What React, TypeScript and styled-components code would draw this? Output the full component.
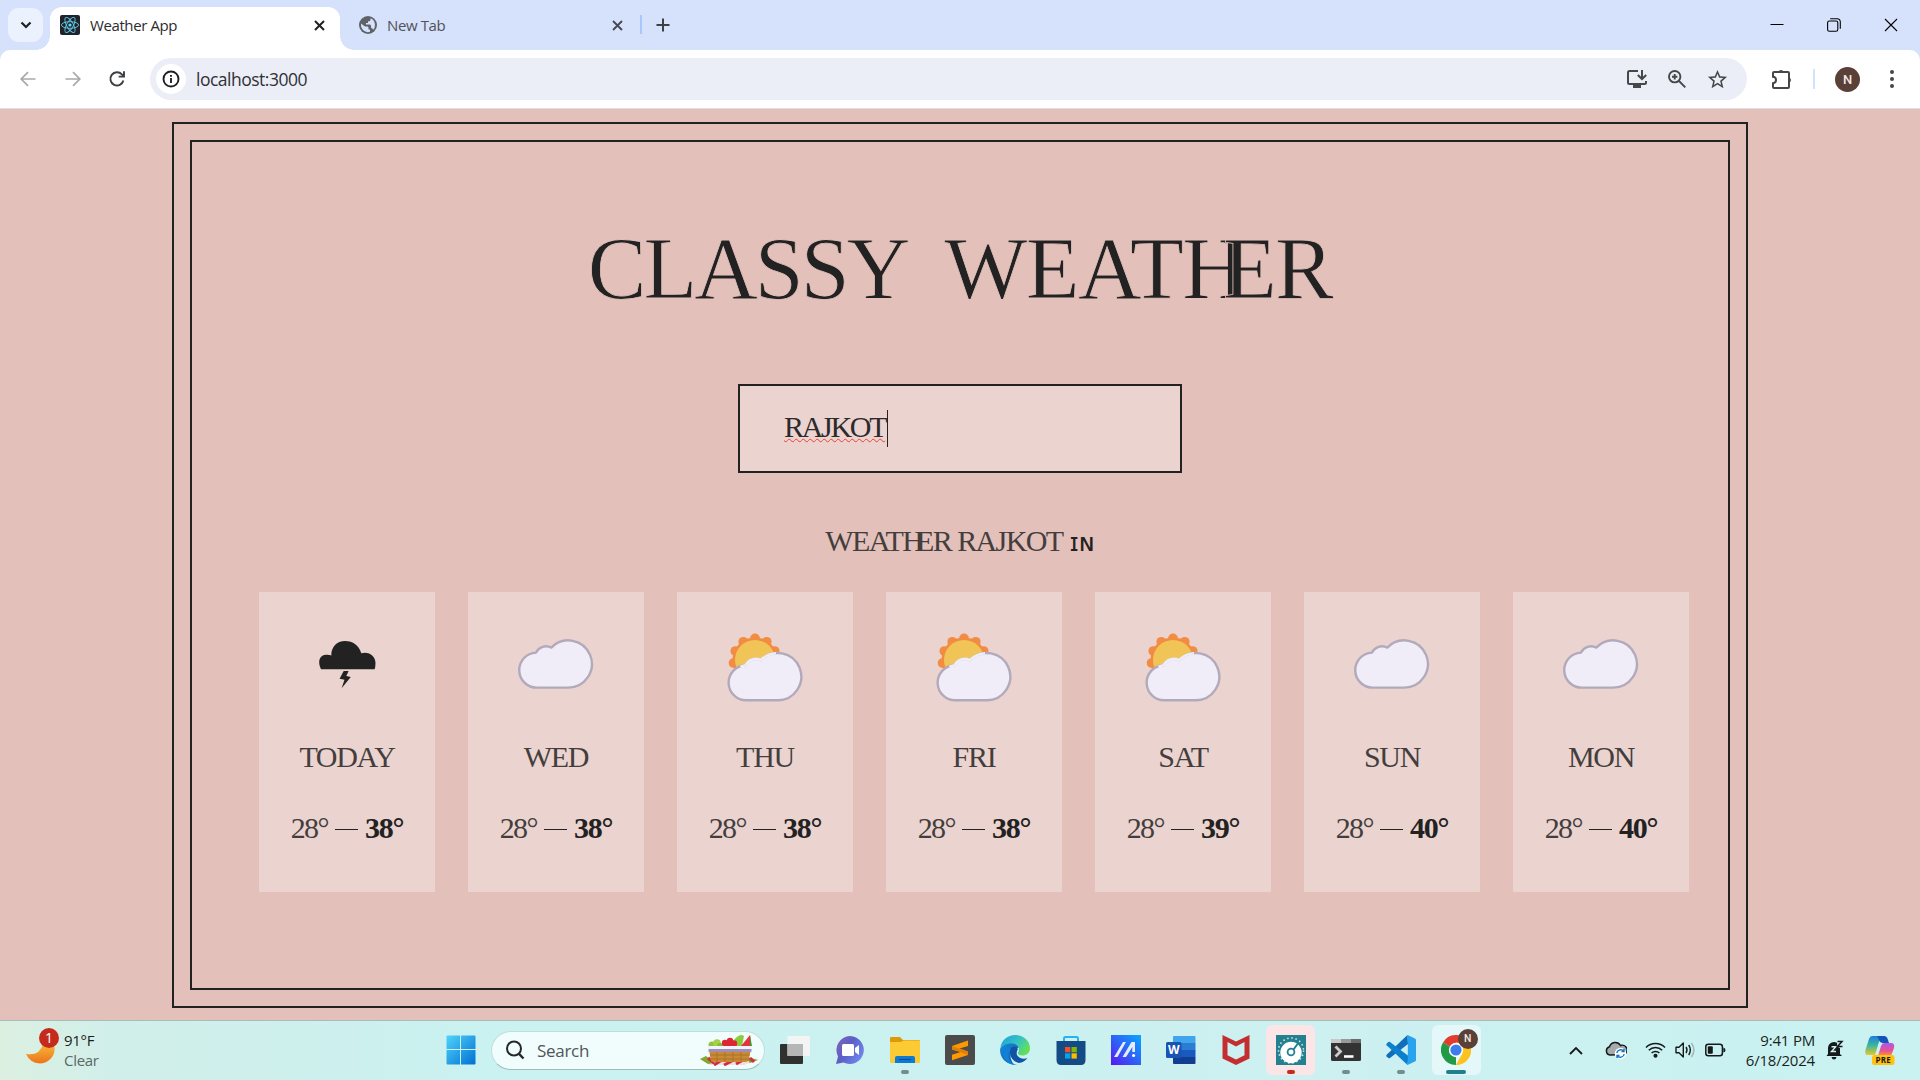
import React from "react";
import styled, { createGlobalStyle } from "styled-components";

const ui = `"Open Sans", "Noto Sans", sans-serif`;
const serif = `"Liberation Serif", serif`;
const ink = "#222222";
const softInk = "#433e3d";
const rose = "#e3c0ba";
const roseLight = "#ebd3cf";

const Global = createGlobalStyle`
  *, *::before, *::after { box-sizing: border-box; }
  body { margin: 0; background: ${rose}; overflow: hidden; }
  svg { display: block; flex: none; }
`;

const Screen = styled.div`
  width: 1920px;
  height: 1080px;
  display: flex;
  flex-direction: column;
  font-family: ${ui};
  overflow: hidden;
`;

/* ---------- browser chrome ---------- */

const TabStrip = styled.header`
  height: 50px;
  flex: none;
  background: #d6e1fc;
  display: flex;
  align-items: flex-end;
  padding-left: 8px;
`;

const TabSearch = styled.div`
  width: 35px;
  height: 34px;
  margin: 0 7px 8px 0;
  border-radius: 11px;
  background: #ebf2fd;
  display: grid;
  place-items: center;
`;

const Tab = styled.div<{ $active?: boolean }>`
  position: relative;
  width: ${(p) => (p.$active ? 290 : 299)}px;
  height: ${(p) => (p.$active ? 43 : 50)}px;
  padding: ${(p) => (p.$active ? "0 15px 7px 10px" : "0 16px 0 19px")};
  background: ${(p) => (p.$active ? "#fff" : "transparent")};
  border-radius: 12px 12px 0 0;
  display: flex;
  align-items: center;
  ${(p) =>
    p.$active &&
    `&::before, &::after {
      content: ""; position: absolute; bottom: 0; width: 14px; height: 14px;
    }
    &::before { left: -14px; background: radial-gradient(circle at 0 0, transparent 13.5px, #fff 14px); }
    &::after { right: -14px; background: radial-gradient(circle at 100% 0, transparent 13.5px, #fff 14px); }`}
`;

const TabTitle = styled.span<{ $active?: boolean }>`
  flex: 1;
  margin-left: 10px;
  font-size: 15px;
  letter-spacing: -0.4px;
  color: ${(p) => (p.$active ? "#2b2c2f" : "#505357")};
`;

const TabDivider = styled.div`
  width: 2px;
  height: 19px;
  margin: 0 14px 16px 1px;
  background: #a8c7fa;
`;

const NewTab = styled.div`
  height: 50px;
  display: flex;
  align-items: center;
`;

const WindowControls = styled.div`
  margin-left: auto;
  height: 50px;
  display: flex;
  align-items: center;
  gap: 43px;
  padding-right: 22px;
`;

const ToolbarBack = styled.div`
  background: #d6e1fc;
  flex: none;
`;

const Toolbar = styled.nav`
  height: 59px;
  background: #fff;
  border-radius: 10px 10px 0 0;
  border-bottom: 1px solid #dcdfe3;
  display: flex;
  align-items: center;
  padding: 0 21px 0 18px;
`;

const NavButtons = styled.div`
  display: flex;
  gap: 24.5px;
  width: 132px;
`;

const Omnibox = styled.div`
  width: 1597px;
  height: 42px;
  border-radius: 21px;
  background: #ebeef7;
  display: flex;
  align-items: center;
  padding: 0 18px 0 6px;
`;

const SiteInfo = styled.div`
  width: 30px;
  height: 30px;
  border-radius: 50%;
  background: #fff;
  display: grid;
  place-items: center;
`;

const Address = styled.span`
  flex: 1;
  margin-left: 10px;
  font-size: 17.5px;
  letter-spacing: -0.5px;
  color: #303134;
`;

const OmniActions = styled.div`
  display: flex;
  align-items: center;
  gap: 19px;
`;

const Extensions = styled.div`
  margin-left: 24px;
`;

const ToolDivider = styled.div`
  width: 2px;
  height: 20px;
  margin: 0 20px 0 20px;
  background: #d3e3fd;
`;

const Avatar = styled.div<{ $size: number }>`
  width: ${(p) => p.$size}px;
  height: ${(p) => p.$size}px;
  border-radius: 50%;
  background: #5a4037;
  color: #f3e9e5;
  font: 500 ${(p) => p.$size * 0.52}px/${(p) => p.$size}px Roboto, sans-serif;
  text-align: center;
`;

const MenuDots = styled.div`
  margin-left: auto;
`;

/* ---------- weather page ---------- */

const Page = styled.main`
  height: 911px;
  flex: none;
  background: ${rose};
  padding: 13px 172px 12px;
  font-family: ${serif};
  color: ${ink};
`;

const OuterFrame = styled.div`
  height: 886px;
  border: 2px solid ${ink};
  padding: 16px;
`;

const InnerFrame = styled.div`
  height: 850px;
  border: 2px solid ${ink};
  display: flex;
  flex-direction: column;
  align-items: center;
`;

const Title = styled.h1`
  margin: 77px 0 65px;
  font-size: 88px;
  font-weight: 400;
  line-height: 100px;
  white-space: nowrap;
  -webkit-text-stroke: 0.8px ${rose};
`;

const Word = styled.span<{ $gap?: number; $track: number }>`
  margin-left: ${(p) => p.$gap ?? 0}px;
  letter-spacing: ${(p) => p.$track}px;
`;

/* pulls the following letter onto the right stem of the H */
const Joining = styled.span`
  letter-spacing: -0.26em;
`;

const SearchField = styled.div`
  width: 444px;
  height: 89px;
  border: 2px solid ${ink};
  background: ${roseLight};
  padding: 24px 44px;
  display: flex;
`;

const Query = styled.span`
  height: 40px;
  margin-top: -3px;
  padding-right: 2px;
  font-size: 30px;
  line-height: 40px;
  letter-spacing: -2.3px;
  color: #2d2a2c;
  text-decoration: underline wavy #ea4335 1.4px;
  text-decoration-skip-ink: none;
  text-underline-offset: 1px;
`;

const Caret = styled.i`
  width: 1px;
  height: 37px;
  background: ${ink};
`;

const Location = styled.h2`
  height: 40px;
  margin: 48px 0 31px;
  font-size: 30px;
  line-height: 40px;
  font-weight: 400;
  letter-spacing: -1.6px;
  white-space: nowrap;
  color: ${softInk};
`;

const Country = styled.span`
  font-family: "DejaVu Sans", sans-serif;
  font-size: 25px;
  line-height: 1;
  letter-spacing: 0;
  margin-left: 7px;
  color: ${ink};
`;

const Forecast = styled.ul`
  align-self: flex-start;
  list-style: none;
  margin: 0 0 0 67px;
  padding: 0;
  display: flex;
  gap: 33px;
`;

const Day = styled.li`
  width: 176px;
  height: 300px;
  padding-top: 33px;
  background: ${roseLight};
  display: flex;
  flex-direction: column;
  align-items: center;
`;

const DayName = styled.p`
  margin: 32px 0 31px;
  font-size: 30px;
  line-height: 40px;
  letter-spacing: -1.3px;
  color: ${softInk};
`;

const Temps = styled.p`
  margin: 0;
  display: flex;
  align-items: center;
  gap: 7px;
  font-size: 30px;
  line-height: 40px;
  letter-spacing: -1.6px;
  color: ${softInk};
`;

const High = styled.strong`
  color: ${ink};
  letter-spacing: -1.2px;
`;

const Dash = styled.span`
  width: 23px;
  height: 1px;
  margin-top: 2px;
  background: ${ink};
`;

/* ---------- taskbar ---------- */

const Taskbar = styled.footer`
  height: 60px;
  flex: none;
  padding-bottom: 1px;
  border-top: 1px solid #a9bcbc;
  background: linear-gradient(90deg, #dcf0e1 0, #d1efea 110px, #cdf0ee 350px, #c9f2f0 480px, #cdf0f1 1300px, #c9f2f1 1920px);
  display: flex;
  align-items: center;
  color: #1b1f20;
`;

const WeatherWidget = styled.div`
  width: 436px;
  padding-left: 26px;
  display: flex;
  align-items: center;
  gap: 3px;
`;

const MoonBadge = styled.div`
  position: relative;
  width: 35px;
  height: 44px;
`;

const Count = styled.span`
  position: absolute;
  left: 13px;
  top: 0;
  width: 20px;
  height: 20px;
  border-radius: 50%;
  background: #c42b1c;
  color: #fff;
  font-size: 14px;
  line-height: 20px;
  text-align: center;
`;

const Lines = styled.div<{ $right?: boolean }>`
  font-size: 15px;
  line-height: 20px;
  letter-spacing: ${(p) => (p.$right ? -0.2 : -0.3)}px;
  text-align: ${(p) => (p.$right ? "right" : "left")};
`;

const Muted = styled.div`
  color: #5a6867;
`;

const StartSlot = styled.div`
  width: 55px;
  padding-left: 10px;
`;

const SearchPill = styled.div`
  width: 274px;
  height: 39px;
  margin-right: 2.5px;
  border: 1px solid #bfdedd;
  border-bottom-color: #9fbcbc;
  border-radius: 20px;
  background: #f1fcfc;
  display: flex;
  align-items: center;
  padding: 0 6px 0 13px;
  font-size: 17px;
  color: #505657;
`;

const PillLabel = styled.span`
  flex: 1;
  margin-left: 12px;
  letter-spacing: -0.3px;
`;

const AppSlot = styled.div<{ $bg?: string }>`
  width: 49.1px;
  height: 50px;
  margin: 0 3px;
  padding-top: 10px;
  border-radius: 6px;
  background: ${(p) => p.$bg ?? "transparent"};
  display: flex;
  flex-direction: column;
  align-items: center;
  gap: 5px;
  position: relative;
`;

const Running = styled.i<{ $wide?: boolean; $color: string }>`
  width: ${(p) => (p.$wide ? 20 : 8)}px;
  height: 4px;
  border-radius: 2px;
  background: ${(p) => p.$color};
`;

const BadgeSpot = styled.div`
  position: absolute;
  right: 3px;
  top: 4px;
`;

const Tray = styled.div`
  margin-left: auto;
  display: flex;
  align-items: center;
  padding-right: 25px;
`;

const TrayItem = styled.div<{ $ml: number }>`
  margin-left: ${(p) => p.$ml}px;
`;

/* ---------- weather drawings ---------- */

const CLOUD = "M21.5 62.6A17.5 17.5 0 0 1 20 27.6A11 11 0 0 1 35.3 22.6A23.6 23.6 0 1 1 52 62.6Z";

const Cloud = ({ low }: { low?: boolean }) => (
  <g transform={low ? "translate(0.4 12.6)" : undefined}>
    <path d={CLOUD} fill="#f1edf8" stroke="#b2aabb" strokeWidth="2.4" strokeLinejoin="round" />
  </g>
);

const CloudIcon = () => (
  <svg width="80" height="80">
    <Cloud />
  </svg>
);

const SunCloudIcon = () => (
  <svg width="80" height="80">
    <g fill="#f28c42">
      <circle cx="30" cy="35" r="22.6" />
      {Array.from({ length: 11 }, (_, i) => {
        const a = (i * 2 * Math.PI) / 11;
        return <circle key={i} cx={30 + 21.6 * Math.sin(a)} cy={35 - 21.6 * Math.cos(a)} r="4.9" />;
      })}
    </g>
    <circle cx="30" cy="35" r="20" fill="#f1c457" />
    <Cloud low />
    <path
      d="M15.5 42Q18 40.600 20.600 40.200A11 11 0 0 1 35.700 35.200A23.600 23.600 0 0 1 51 28.200"
      fill="none"
      stroke="#f1edf8"
      strokeWidth="2.6"
    />
  </svg>
);

const ThunderIcon = () => (
  <svg width="80" height="80" fill={ink}>
    <path d="M14 44.2C10.500 37 12 29.700 19.500 29.700Q22.500 29.500 24.300 30.600C24 22 30 16 38 16C46 16 52 20.500 54.300 28.300C62 26 68.500 31.500 68.500 38Q68.500 42 67.600 44.200Z" />
    <path d="M36.700 46H41.600L39.300 51L43.800 52L34.600 63.300L37.500 54.700L32.600 53.700Z" />
  </svg>
);

const icons = { thunder: ThunderIcon, cloud: CloudIcon, sun: SunCloudIcon };

const forecast: { day: string; min: number; max: number; icon: keyof typeof icons }[] = [
  { day: "TODAY", min: 28, max: 38, icon: "thunder" },
  { day: "WED", min: 28, max: 38, icon: "cloud" },
  { day: "THU", min: 28, max: 38, icon: "sun" },
  { day: "FRI", min: 28, max: 38, icon: "sun" },
  { day: "SAT", min: 28, max: 39, icon: "sun" },
  { day: "SUN", min: 28, max: 40, icon: "cloud" },
  { day: "MON", min: 28, max: 40, icon: "cloud" },
];

/* ---------- small line icons ---------- */

const Cross = ({ size, w = 1.8, color = "#202124" }: { size: number; w?: number; color?: string }) => (
  <svg width={size} height={size} viewBox={`0 0 ${size} ${size}`} stroke={color} strokeWidth={w}>
    <path d={`M1 1L${size - 1} ${size - 1}M${size - 1} 1L1 ${size - 1}`} />
  </svg>
);

const ReactFavicon = () => (
  <svg width="20" height="20" viewBox="0 0 20 20" fill="none" stroke="#61c9e8" strokeWidth=".9">
    <rect width="20" height="20" rx="2" fill="#20232a" stroke="none" />
    {[0, 60, 120].map((r) => (
      <ellipse key={r} cx="10" cy="10" rx="8.600" ry="3.300" transform={`rotate(${r} 10 10)`} />
    ))}
    <circle cx="10" cy="10" r="1.600" fill="#61dafb" stroke="none" />
  </svg>
);

const Globe = () => (
  <svg width="18" height="18" viewBox="0 0 18 18">
    <circle cx="9" cy="9" r="9" fill="#5f6368" />
    <path d="M1.900 7.500L6 10.500H8.500Q9.500 10.500 9.500 12V13.500H11V15.800Q7 17 4 14Q1.500 11.500 1.900 7.500Z" fill="#d6e1fc" />
    <path d="M11.500 2.300Q15.800 4 16 9Q16 12 14.200 13.800Q13.500 12 12 11.700V9.500Q11.500 8.500 10.500 8.500H7V7H9V5.300H10.800Q11.800 5 11.500 2.300Z" fill="#d6e1fc" />
  </svg>
);

const Arrow = ({ flip }: { flip?: boolean }) => (
  <svg width="20" height="20" viewBox="0 0 20 20" fill="none" stroke="#a7a9ac" strokeWidth="1.700" transform={flip ? "scale(-1 1)" : undefined}>
    <path d="M17.500 10H3.500M10 3.200L3.200 10L10 16.800" />
  </svg>
);

const Reload = () => (
  <svg width="20" height="20" viewBox="0 0 20 20" fill="none" stroke="#3c3f43" strokeWidth="1.900">
    <path d="M16.400 11.500A6.600 6.600 0 1 1 14.900 5.400L16.800 7.300M17 2.300V7.600H11.700" />
  </svg>
);

const InfoIcon = () => (
  <svg width="18" height="18" viewBox="0 0 18 18" fill="none" stroke="#202124" strokeWidth="1.900">
    <circle cx="9" cy="9" r="7.500" />
    <path d="M9 8V13M9 4.900V6.700" />
  </svg>
);

const InstallIcon = () => (
  <svg width="22" height="20" viewBox="0 0 22 20" fill="none" stroke="#474747" strokeWidth="2">
    <path d="M12 2H3.500Q2 2 2 3.500V13.500Q2 15 3.500 15H18.500Q20 15 20 13.500V12" />
    <path d="M16 1V9.500M11.800 6L16 10L20.200 6" />
    <path d="M7 17.500H15" strokeWidth="3" />
  </svg>
);

const ZoomIcon = () => (
  <svg width="20" height="20" viewBox="0 0 20 20" fill="none" stroke="#474747" strokeWidth="1.900">
    <circle cx="7.700" cy="7.700" r="5.700" />
    <path d="M12 12L18.300 18.300M7.700 5V10.400M5 7.700H10.400" />
  </svg>
);

const StarIcon = () => (
  <svg width="23" height="23" viewBox="0 0 24 24" fill="#474747">
    <path d="M22 9.240l-7.190-.62L12 2 9.190 8.630 2 9.240l5.460 4.730L5.820 21 12 17.270 18.180 21l-1.630-7.030L22 9.240zM12 15.400l-3.760 2.270 1-4.280-3.320-2.880 4.380-.38L12 6.100l1.710 4.040 4.380.38-3.320 2.880 1 4.280L12 15.400z" />
  </svg>
);

const Puzzle = () => (
  <svg width="22" height="22" viewBox="0 0 22 22" fill="none" stroke="#474747" strokeWidth="2">
    <path d="M3 4H17Q18 4 18 5V19Q18 20 17 20H3Q2 20 2 19V15.200C6 15 6 9 2 8.800V5Q2 4 3 4Z" />
    <path d="M7.400 4A2.700 2.700 0 0 1 12.600 4ZM18 9.400A2.700 2.700 0 0 1 18 14.600Z" fill="#474747" stroke="none" />
  </svg>
);

/* ---------- taskbar drawings ---------- */

const Windows = () => (
  <svg width="30" height="30" viewBox="0 0 30 30">
    <defs>
      <linearGradient id="win" x1="0" y1="0" x2="1" y2="1">
        <stop offset="0" stopColor="#51d3fb" />
        <stop offset="1" stopColor="#0070d2" />
      </linearGradient>
    </defs>
    <path fill="url(#win)" d="M1.500 .5H14V14H.5V1.500Q.5.5 1.500.5ZM15 .5H28.500Q29.500.5 29.500 1.500V14H15ZM.5 15H14V29.500H1.500Q.5 29.500.5 28.500ZM15 15H29.500V28.500Q29.500 29.500 28.500 29.500H15Z" />
  </svg>
);

const Magnifier = () => (
  <svg width="20" height="20" viewBox="0 0 20 20" fill="none" stroke="#26292b" strokeWidth="2">
    <circle cx="9" cy="8.500" r="7" />
    <path d="M13.800 13.600L18.500 18.500" strokeWidth="2.400" />
  </svg>
);

const Picnic = () => (
  <svg width="58" height="32" viewBox="0 0 58 32">
    <path d="M0 25L14 21H46L58 26L44 31H10Z" fill="#f3dedd" />
    <path d="M0 25L6 22L14 29L8 30ZM44 22L58 26L50 29Z" fill="#7fa82c" />
    <path d="M8 24L14 29M14 31L22 26M24 31L32 27M36 30L45 25M50 24L54 28" stroke="#d62d3e" strokeWidth="3" />
    <circle cx="12" cy="11" r="3.500" fill="#8fc440" />
    <circle cx="17" cy="9" r="3.800" fill="#a2d24c" />
    <circle cx="20" cy="12" r="3" fill="#86bb38" />
    <path d="M34 6Q40 -1 44 2L42 12H34Z" fill="#8ecb3c" />
    <path d="M50 1L41 12H51Z" fill="#e3343e" />
    <path d="M50 1L52 12H50Z" fill="#3f9a35" />
    <g fill="#dc2732">
      <circle cx="25" cy="9" r="3.200" />
      <circle cx="30" cy="7" r="3.200" />
      <circle cx="34" cy="9.500" r="3.200" />
      <circle cx="29" cy="12" r="3" />
    </g>
    <path d="M9 16H51L48 27Q47 28 45 28H14Q12 28 11 27Z" fill="#c98a35" />
    <path d="M10 21H50M11 25H49M17 17V28M25 17V28M33 17V28M41 17V28" stroke="#a66c2a" strokeWidth=".8" />
    <rect x="8" y="12" width="44" height="3" rx="1" fill="#f2f3f9" />
    <rect x="8.500" y="15" width="43" height="2.800" fill="#9a8fc4" />
  </svg>
);

const Moon = () => (
  <svg width="29" height="22" viewBox="0 0 29 22">
    <defs>
      <linearGradient id="moon" x1="0" y1="0" x2="0" y2="1">
        <stop offset="0" stopColor="#f6b73a" />
        <stop offset="1" stopColor="#ec7419" />
      </linearGradient>
    </defs>
    <path d="M0 12Q14 14 17 2L28 3C31 14 22 21.500 14 21.500Q4 21 0 12Z" fill="url(#moon)" />
  </svg>
);

const MoonPlace = styled.div`
  padding-top: 14px;
`;

const TaskView = () => (
  <svg width="30" height="30" viewBox="0 0 30 30">
    <rect y="9" width="23" height="20" rx="1" fill="#30302f" />
    <rect x="7.500" y="1" width="22.500" height="20" rx="1" fill="#f3f5f5" />
    <rect x="7.500" y="9" width="15.500" height="12" fill="#b5b7b7" />
  </svg>
);

const Chat = () => (
  <svg width="30" height="30" viewBox="0 0 30 30">
    <defs>
      <linearGradient id="chat" x1="0" y1="0" x2="1" y2=".6">
        <stop offset="0" stopColor="#8b62b8" />
        <stop offset=".5" stopColor="#5b5fc7" />
        <stop offset="1" stopColor="#6d86ec" />
      </linearGradient>
    </defs>
    <path d="M15 1A14 14 0 1 1 8.500 27.500L1 29L3 21.500A14 14 0 0 1 15 1Z" fill="url(#chat)" />
    <rect x="7" y="9" width="12" height="12" rx="1.500" fill="#fff" />
    <path d="M20 13L24 10V20L20 17Z" fill="#fff" />
  </svg>
);

const Folder = () => (
  <svg width="30" height="30" viewBox="0 0 30 30">
    <path d="M0 3Q0 2 1 2H10L13 5H29Q30 5 30 6V12H0Z" fill="#dd9a06" />
    <path d="M0 7H11L13.500 5.500H30V27Q30 28 29 28H1Q0 28 0 27Z" fill="#fccb33" />
    <path d="M5 28V23Q5 21 7 21H23Q25 21 25 23V28Z" fill="#0f7ad2" />
    <path d="M9 24.500H21" stroke="#0a4f94" strokeWidth="1.200" />
  </svg>
);

const Sublime = () => (
  <svg width="30" height="30" viewBox="0 0 30 30">
    <rect width="30" height="30" rx="2" fill="#4b4b4b" />
    <path d="M7 11L23 5.500V11L14.500 13.600L23 16.500V20L7 25.200V19.800L15.500 17L7 14.500Z" fill="#ff9800" />
    <path d="M7 14.500V11L23 16.500V20L15.500 17Z" fill="#e07f06" />
  </svg>
);

const Edge = () => (
  <svg width="30" height="30" viewBox="0 0 30 30">
    <defs>
      <linearGradient id="edgeTop" x1="0" y1="0" x2="1" y2=".5">
        <stop offset="0" stopColor="#1a9fdc" />
        <stop offset=".6" stopColor="#35c3c4" />
        <stop offset="1" stopColor="#62df5a" />
      </linearGradient>
      <linearGradient id="edgeLow" x1="0" y1="0" x2="1" y2="1">
        <stop offset="0" stopColor="#1393e0" />
        <stop offset="1" stopColor="#114f9c" />
      </linearGradient>
    </defs>
    <path d="M0 15C0 12 5 7.500 12 7.500C17 7.500 19 11 18.500 13C10 13 8 23 14 29.500C5 29 0 22 0 15Z" fill="url(#edgeLow)" />
    <path d="M11 13C8 19 12 27 19 28Q24 27.500 27.500 23C24 24.500 18.500 23.500 17 20Q16 17 18 14Q15 10 11 13Z" fill="#1055a5" />
    <path d="M10.500 14C6 20 9 29 17 29.800Q11 30.500 6 26Q1 20 5 15Q8 12 10.500 14Z" fill="#1280d4" />
    <path d="M.3 13C1.500 5 8 0 15 0C24 0 30 6.500 30 13C30 18.500 26 20.500 22.500 20.500C19 20.500 17.500 19 18 17.500C20 15 19 9 12 8.500C6 8.200 1.500 11 .3 13Z" fill="url(#edgeTop)" />
  </svg>
);

const Store = () => (
  <svg width="30" height="30" viewBox="0 0 30 30">
    <path d="M8 7V3.500Q8 2 9.500 2H20.500Q22 2 22 3.500V7" fill="none" stroke="#26b3f0" strokeWidth="2" />
    <path d="M.5 6H29.500V25Q29.500 30 25 30H5Q.5 30 .5 25Z" fill="#144b85" />
    <path d="M9 12H14.300V17.300H9Z" fill="#f25022" />
    <path d="M15.500 12H20.800V17.300H15.500Z" fill="#7fba00" />
    <path d="M9 18.300H14.300V23.600H9Z" fill="#00a4ef" />
    <path d="M15.500 18.300H20.800V23.600H15.500Z" fill="#ffb900" />
  </svg>
);

const MyAsus = () => (
  <svg width="30" height="30" viewBox="0 0 30 30">
    <defs>
      <linearGradient id="asus" x1="0" y1="1" x2="1" y2="0">
        <stop offset="0" stopColor="#5a17f0" />
        <stop offset=".5" stopColor="#2d62f7" />
        <stop offset="1" stopColor="#08a8ff" />
      </linearGradient>
    </defs>
    <rect width="30" height="30" fill="url(#asus)" />
    <path d="M3 22L12 7H15L6.500 22ZM11.500 22L20.500 7H24V17H21.300V12L15 22Z" fill="#e6ebff" />
    <circle cx="22.600" cy="20.500" r="1.600" fill="#fff" />
  </svg>
);

const WordDoc = () => (
  <svg width="30" height="30" viewBox="0 0 30 30">
    <path d="M7 2Q7 1 8 1H28.500Q29.500 1 29.500 2V8H7Z" fill="#41a5ee" />
    <path d="M7 8H29.500V15H7Z" fill="#2b7cd3" />
    <path d="M7 15H29.500V22H7Z" fill="#185abd" />
    <path d="M7 22H29.500V28Q29.500 29 28.500 29H8Q7 29 7 28Z" fill="#103f91" />
    <rect y="7" width="15.500" height="16" rx="1.500" fill="#1853b5" />
    <text x="7.700" y="19.200" fill="#fff" fontSize="12" fontWeight="700" textAnchor="middle" fontFamily="Open Sans">W</text>
  </svg>
);

const McAfee = () => (
  <svg width="30" height="30" viewBox="0 0 30 30">
    <path d="M1.500 0L15 6.500L28.500 0V23.500L15 30L1.500 23.500ZM6.500 7V20.200L15 24.500L23.500 20.200V7L15 11.500Z" fill="#c32f31" fillRule="evenodd" />
  </svg>
);

const Dial = () => (
  <svg width="30" height="30" viewBox="0 0 30 30">
    <rect width="30" height="30" fill="#22808f" />
    <circle cx="15" cy="15.500" r="12.500" fill="none" stroke="#cfe6ea" strokeWidth="1.600" strokeDasharray="1.500 2.700" />
    <circle cx="15" cy="17.500" r="10.700" fill="#fff" />
    <circle cx="15" cy="17" r="3.400" fill="none" stroke="#22808f" strokeWidth="1.800" />
    <path d="M17.500 14.500L23 7" stroke="#22808f" strokeWidth="2" />
  </svg>
);

const Terminal = () => (
  <svg width="30" height="30" viewBox="0 0 30 30">
    <rect y="4" width="30" height="22" rx="1.500" fill="#333" />
    <path d="M0 8V5Q0 4 1 4H10V8Z" fill="#c9c9c9" />
    <path d="M10 4H20V8H10Z" fill="#999" />
    <path d="M20 4H29Q30 4 30 5V8H20Z" fill="#6b6b6b" />
    <path d="M4.500 11.500L9.500 16.500L4.500 21.500" fill="none" stroke="#ccc" strokeWidth="2.800" />
    <path d="M13 21.500H22.500" stroke="#fff" strokeWidth="2.600" />
  </svg>
);

const VSCode = () => (
  <svg width="30" height="30" viewBox="0 0 30 30">
    <path d="M21.500 0L22 9L4 23Q3 23.500 2.300 23L.5 21.200Q0 20.500.6 19.800Z" fill="#0f6fb8" />
    <path d="M.6 10.200Q0 9.500.5 8.800L2.300 7Q3 6.500 4 7L22.500 21L21.500 30Z" fill="#0d80cd" />
    <path d="M21.500 0L29 3.500Q30 4 30 5V25Q30 26 29 26.500L21.500 30Q20.500 29.500 21.800 28V2Q20.500.5 21.500 0Z" fill="#2aa3ef" />
  </svg>
);

const Chrome = () => (
  <svg width="30" height="30" viewBox="0 0 30 30">
    <path d="M15 15L2 7.500A15 15 0 0 1 28 7.500Z" fill="#e33b2e" />
    <path d="M15 15L15 30A15 15 0 0 1 2 7.500Z" fill="#229a45" />
    <path d="M15 15H30A15 15 0 0 1 15 30L21.500 18.700Z" fill="#fcc31e" />
    <path d="M15 7.500H28A15 15 0 0 1 15 30L21.500 18.700Z" fill="#fcc31e" />
    <circle cx="15" cy="15" r="7.200" fill="#fff" />
    <circle cx="15" cy="15" r="5.600" fill="#3b7ded" />
  </svg>
);

const CloudSync = () => (
  <svg width="22" height="20" viewBox="0 0 22 20">
    <path d="M5 15A4.200 4.200 0 0 1 4.500 6.800A6 6 0 0 1 15.500 5.500A4.800 4.800 0 0 1 19 14.500Z" fill="#a7abab" stroke="#161a1a" strokeWidth="1.500" />
    <circle cx="15.500" cy="13.500" r="5.800" fill="#fff" />
    <path d="M11.800 13A3.900 3.900 0 0 1 18.800 11.300M19.200 14A3.900 3.900 0 0 1 12.200 15.700M19 9V11.600H16.500M12 18V15.400H14.500" fill="none" stroke="#1173c4" strokeWidth="1.400" />
  </svg>
);

const Wifi = () => (
  <svg width="21" height="18" viewBox="0 0 21 18" fill="none" stroke="#161a1a" strokeWidth="1.500">
    <path d="M1 6.500A13.500 13.500 0 0 1 20 6.500M3.800 9.300A9.500 9.500 0 0 1 17.200 9.300M6.600 12A5.500 5.500 0 0 1 14.400 12" />
    <circle cx="10.500" cy="14.800" r="1.300" fill="#161a1a" />
  </svg>
);

const Speaker = () => (
  <svg width="21" height="18" viewBox="0 0 21 18" fill="none" stroke="#161a1a" strokeWidth="1.400">
    <path d="M1 6.200H4L8.300 2V16L4 11.800H1Z" strokeLinejoin="round" />
    <path d="M11 6Q13 9 11 12M13.700 4Q17 9 13.700 14" />
    <path d="M16.400 2Q21.500 9 16.400 16" stroke="#9db5b5" />
  </svg>
);

const Battery = () => (
  <svg width="21" height="14" viewBox="0 0 21 14">
    <rect x=".8" y="1.200" width="16.600" height="11.600" rx="2.500" fill="none" stroke="#161a1a" strokeWidth="1.500" />
    <rect x="2.800" y="3.200" width="5" height="7.600" rx="1" fill="#161a1a" />
    <path d="M18.400 4.500Q20.500 5 20.500 7T18.400 9.500Z" fill="#161a1a" />
  </svg>
);

const Bell = () => (
  <svg width="18" height="20" viewBox="0 0 18 20">
    <path d="M2 14V8A6 6 0 0 1 14 8V14L16 16H.5ZM5.500 17H10.500Q10 19.500 8 19.500T5.500 17Z" fill="#161a1a" />
    <circle cx="15" cy="4" r="4" fill="#cbf1f0" />
    <path d="M5.500 6.800H9.800L5.500 11.500H10" fill="none" stroke="#cbf1f0" strokeWidth="1.400" />
    <path d="M11.500 1.500H16L11.500 6.500H16.500" fill="none" stroke="#161a1a" strokeWidth="1.500" />
  </svg>
);

const Copilot = () => (
  <svg width="30" height="30" viewBox="0 0 30 30">
    <defs>
      <linearGradient id="copA" x1="0" y1="0" x2="0" y2="1">
        <stop offset="0" stopColor="#1b7fe0" />
        <stop offset=".5" stopColor="#3fb59a" />
        <stop offset="1" stopColor="#e7c92c" />
      </linearGradient>
      <linearGradient id="copB" x1="0" y1="0" x2="0" y2="1">
        <stop offset="0" stopColor="#a75bea" />
        <stop offset=".6" stopColor="#ec4f91" />
        <stop offset="1" stopColor="#f79a3b" />
      </linearGradient>
    </defs>
    <path d="M7 1H18Q15 3 13 10L10 20H3Q-1 20 .8 14L4 4Q5 1 7 1Z" fill="url(#copA)" />
    <path d="M12 1H19Q22 1 23 5L24 8H18Q15 8 14 5Z" fill="#1653b8" />
    <path d="M19 8H26Q30 8 29 13L26 21H13L16 11Q17 8 19 8Z" fill="url(#copB)" />
    <rect x="7" y="20" width="22.500" height="10" rx="2.500" fill="#ffc20e" />
    <text x="18.300" y="28" fill="#1b1b1b" fontSize="8" fontWeight="700" textAnchor="middle" fontFamily="Open Sans" letterSpacing=".3">PRE</text>
  </svg>
);

const pinned: { icon: React.FC; run?: string; bg?: string; wide?: boolean; badge?: boolean }[] = [
  { icon: TaskView },
  { icon: Chat },
  { icon: Folder, run: "#758c8c" },
  { icon: Sublime },
  { icon: Edge },
  { icon: Store },
  { icon: MyAsus },
  { icon: WordDoc },
  { icon: McAfee },
  { icon: Dial, run: "#c42b1c", bg: "#fbe5e7" },
  { icon: Terminal, run: "#758c8c" },
  { icon: VSCode, run: "#758c8c" },
  { icon: Chrome, run: "#1f8090", bg: "#e4f7f9", wide: true, badge: true },
];

const Browser = () => (
  <>
    <TabStrip>
      <TabSearch>
        <svg width="12" height="8" viewBox="0 0 12 8" fill="none" stroke="#1f2023" strokeWidth="2.200">
          <path d="M1.500 1.500L6 6L10.500 1.500" />
        </svg>
      </TabSearch>
      <Tab $active>
        <ReactFavicon />
        <TabTitle $active>Weather App</TabTitle>
        <Cross size={11} w={2} />
      </Tab>
      <Tab>
        <Globe />
        <TabTitle>New Tab</TabTitle>
        <Cross size={11} color="#45484d" />
      </Tab>
      <TabDivider />
      <NewTab>
        <svg width="14" height="14" stroke="#3c3f43" strokeWidth="2">
          <path d="M7 .5V13.500M.5 7H13.500" />
        </svg>
      </NewTab>
      <WindowControls>
        <svg width="14" height="14" stroke="#000" strokeWidth="1">
          <path d="M.5 6.500H13.500" />
        </svg>
        <svg width="14" height="14" fill="none" stroke="#000" strokeWidth="1.100">
          <rect x=".6" y="3" width="10.200" height="10.200" rx="1.800" />
          <path d="M3.200 .7H10Q13.300 .7 13.300 4V10.800" />
        </svg>
        <Cross size={14} w={1.1} color="#000" />
      </WindowControls>
    </TabStrip>
    <ToolbarBack>
      <Toolbar>
        <NavButtons>
          <Arrow />
          <Arrow flip />
          <Reload />
        </NavButtons>
        <Omnibox>
          <SiteInfo>
            <InfoIcon />
          </SiteInfo>
          <Address>localhost:3000</Address>
          <OmniActions>
            <InstallIcon />
            <ZoomIcon />
            <StarIcon />
          </OmniActions>
        </Omnibox>
        <Extensions>
          <Puzzle />
        </Extensions>
        <ToolDivider />
        <Avatar $size={25}>N</Avatar>
        <MenuDots>
          <svg width="14" height="20" fill="#474747">
            <circle cx="7" cy="3" r="2" />
            <circle cx="7" cy="10" r="2" />
            <circle cx="7" cy="17" r="2" />
          </svg>
        </MenuDots>
      </Toolbar>
    </ToolbarBack>
  </>
);

const WeatherPage = () => (
  <Page>
    <OuterFrame>
      <InnerFrame>
        <Title>
          <Word $track={-3}>CLASSY</Word>{" "}
          <Word $gap={15} $track={-1.6}>
            WEAT<Joining>H</Joining>ER
          </Word>
        </Title>
        <SearchField>
          <Query>RAJKOT</Query>
          <Caret />
        </SearchField>
        <Location>
          WEAT<Joining>H</Joining>ER RAJKOT<Country>ɪɴ</Country>
        </Location>
        <Forecast>
          {forecast.map(({ day, min, max, icon }) => {
            const Icon = icons[icon];
            return (
              <Day key={day}>
                <Icon />
                <DayName>{day}</DayName>
                <Temps>
                  <span>{min}°</span>
                  <Dash />
                  <High>{max}°</High>
                </Temps>
              </Day>
            );
          })}
        </Forecast>
      </InnerFrame>
    </OuterFrame>
  </Page>
);

const WindowsTaskbar = () => (
  <Taskbar>
    <WeatherWidget>
      <MoonBadge>
        <MoonPlace>
          <Moon />
        </MoonPlace>
        <Count>1</Count>
      </MoonBadge>
      <Lines>
        <div>91°F</div>
        <Muted>Clear</Muted>
      </Lines>
    </WeatherWidget>
    <StartSlot>
      <Windows />
    </StartSlot>
    <SearchPill>
      <Magnifier />
      <PillLabel>Search</PillLabel>
      <Picnic />
    </SearchPill>
    {pinned.map(({ icon: Icon, run, bg, wide, badge }, i) => (
      <AppSlot key={i} $bg={bg}>
        <Icon />
        {run && <Running $color={run} $wide={wide} />}
        {badge && (
          <BadgeSpot>
            <Avatar $size={20}>N</Avatar>
          </BadgeSpot>
        )}
      </AppSlot>
    ))}
    <Tray>
      <svg width="14" height="9" fill="none" stroke="#161a1a" strokeWidth="1.800">
        <path d="M1 8L7 2L13 8" />
      </svg>
      <TrayItem $ml={22}>
        <CloudSync />
      </TrayItem>
      <TrayItem $ml={18}>
        <Wifi />
      </TrayItem>
      <TrayItem $ml={9}>
        <Speaker />
      </TrayItem>
      <TrayItem $ml={9}>
        <Battery />
      </TrayItem>
      <TrayItem $ml={20}>
        <Lines $right>
          <div>9:41 PM</div>
          <div>6/18/2024</div>
        </Lines>
      </TrayItem>
      <TrayItem $ml={11}>
        <Bell />
      </TrayItem>
      <TrayItem $ml={21}>
        <Copilot />
      </TrayItem>
    </Tray>
  </Taskbar>
);

export default function App() {
  return (
    <Screen>
      <Global />
      <Browser />
      <WeatherPage />
      <WindowsTaskbar />
    </Screen>
  );
}
